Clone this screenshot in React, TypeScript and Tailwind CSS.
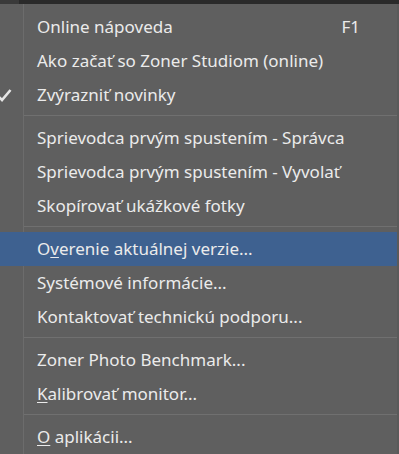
import React from "react";

type Item =
  | { sep: true }
  | { sep?: false; label: React.ReactNode; shortcut?: string; checked?: boolean; active?: boolean };

const items: Item[] = [
  { label: "Online nápoveda", shortcut: "F1" },
  { label: "Ako začať so Zoner Studiom (online)" },
  { label: "Zvýrazniť novinky", checked: true },
  { sep: true },
  { label: "Sprievodca prvým spustením - Správca" },
  { label: "Sprievodca prvým spustením - Vyvolať" },
  { label: "Skopírovať ukážkové fotky" },
  { sep: true },
  {
    label: (
      <>
        O<u className="underline-offset-2">v</u>erenie aktuálnej verzie...
      </>
    ),
    active: true,
  },
  { label: "Systémové informácie..." },
  { label: "Kontaktovať technickú podporu..." },
  { sep: true },
  { label: "Zoner Photo Benchmark..." },
  {
    label: (
      <>
        <u className="underline-offset-2">K</u>alibrovať monitor...
      </>
    ),
  },
  { sep: true },
  {
    label: (
      <>
        <u className="underline-offset-2">O</u> aplikácii...
      </>
    ),
  },
];

const Check = () => (
  <svg width="16" height="14" viewBox="0 0 16 14" className="absolute -left-[4px] top-[10px]">
    <path d="M1.5 7.5 L6 12 L14.5 2" fill="none" stroke="#e6e6e6" strokeWidth="2.6" />
  </svg>
);

export default function App() {
  return (
    <div
      className="w-[399px] h-[454px] overflow-hidden bg-[#5f5f5f] flex flex-col"
      style={{ fontFamily: '"Noto Sans", "Open Sans", sans-serif' }}
    >
      <div className="h-[4px] flex shrink-0">
        <div className="w-[19px] bg-[#3a3a3a]" />
        <div className="flex-1 bg-[#2a2a2a]" />
      </div>
      <div className="flex flex-1">
        <div className="flex-1 flex flex-col pt-[6px] relative">
          <div className="absolute left-[23px] top-0 bottom-0 w-px bg-[#6c6c6c]" />
          {items.map((it, i) =>
            it.sep ? (
              <div key={i} className="h-[9px] shrink-0 pt-[3px] pl-[24px]">
                <div className="h-px bg-[#707070]" />
              </div>
            ) : (
              <div
                key={i}
                className={`relative h-[34px] shrink-0 flex items-center pl-[37px] pr-[37px] text-[17px] text-[#ebebeb] ${
                  it.active ? "bg-[#3e6190]" : ""
                }`}
              >
                {it.checked && <Check />}
                <span className="flex-1 whitespace-nowrap">{it.label}</span>
                {it.shortcut && <span>{it.shortcut}</span>}
              </div>
            )
          )}
        </div>
        <div className="w-[2px] bg-[#5a5a5a]" />
      </div>
    </div>
  );
}
